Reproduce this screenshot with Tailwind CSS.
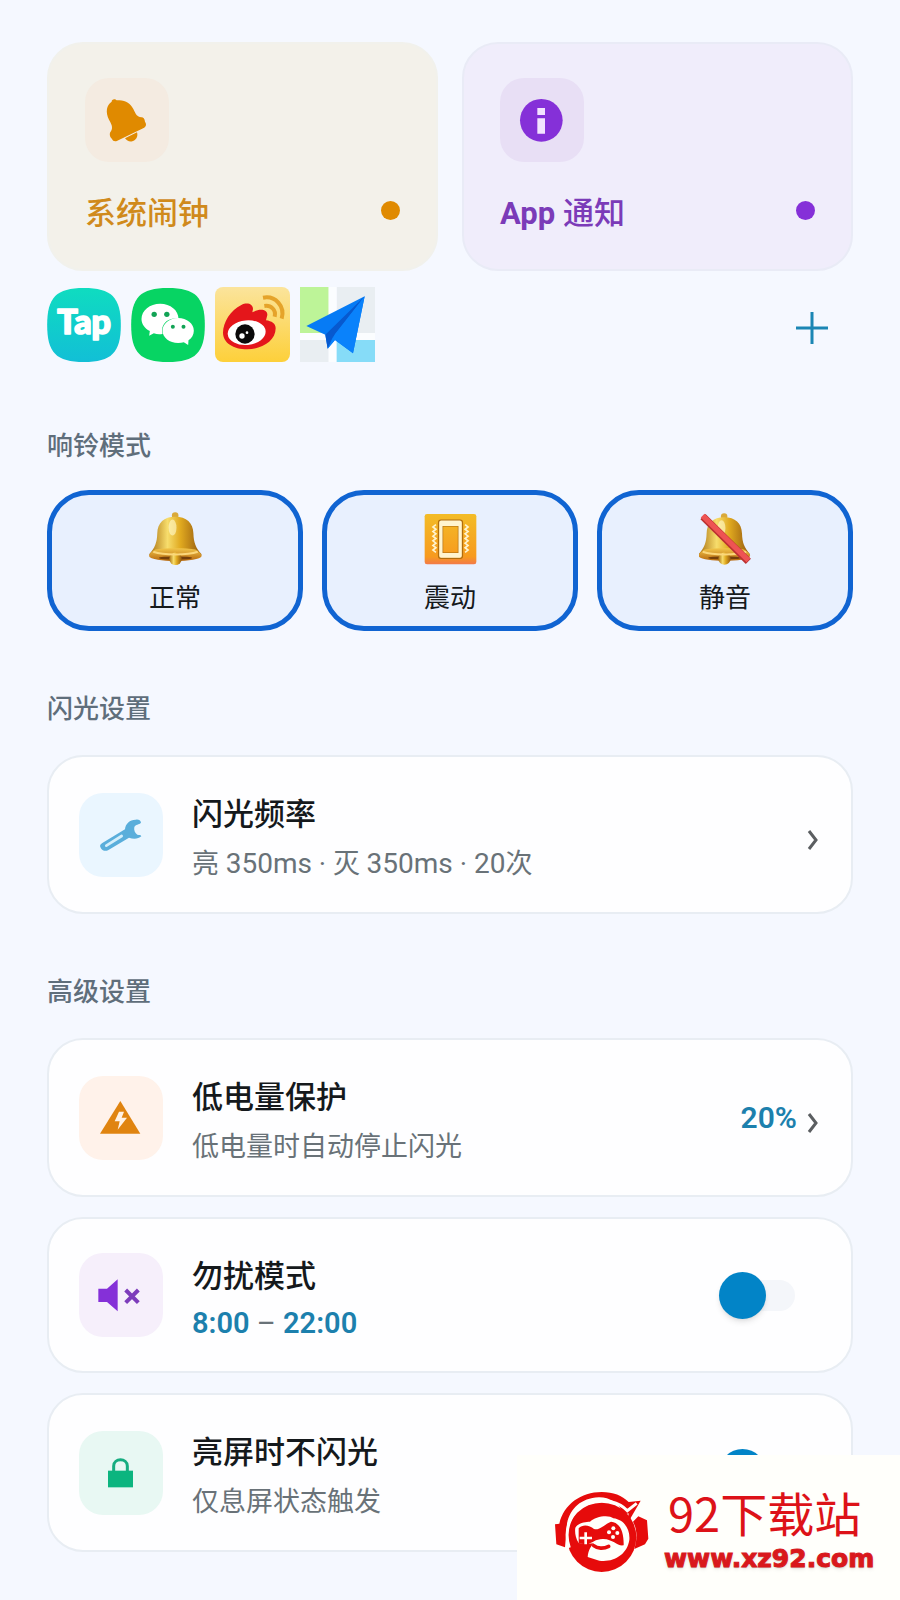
<!DOCTYPE html>
<html lang="zh-CN">

<head>
    <meta charset="UTF-8">
    <meta name="viewport" content="width=device-width, initial-scale=1.0">
    <title>闪光设置</title>

    <!--Tailwind library-->
    <script src="https://cdn.jsdelivr.net/npm/@tailwindcss/browser@4"></script>
</head>

<body class="relative min-h-screen overflow-x-hidden bg-[#f5f8ff] font-[Roboto,'Noto_Sans_CJK_SC',sans-serif] text-[#15191c]">
    <main class="px-[47px] pt-[42px] pb-10">
        <!--Source cards-->
        <div class="grid grid-cols-2 gap-6">
            <button class="rounded-[36px] border-2 border-[#f1f1ec] bg-[#f3f1ea] px-[36px] pt-[34px] pb-[37px] text-left">
                <span class="block size-[84px] rounded-3xl bg-[#f4ebe1]">
                    <svg viewBox="165 145 252 252" class="size-full" fill="#e08a00">
                        <path d="M245 216C244 208 256 206 260 212C285 209 301 220 310 238C317 253 321 262 334 263C342 263 344 270 345 276C350 283 349 291 341 295L262 333C254 337 249 334 246 328C239 322 237 311 243 305C250 292 244 283 237 270C226 248 229 226 245 216Z" />
                        <path d="M285 326L321 308C325 321 318 331 307 335C297 337 290 333 285 326Z" />
                    </svg>
                </span>
                <span class="mt-[34px] flex items-center justify-between">
                    <span class="text-[31px] leading-9 font-medium text-[#d08a1c]">系统闹钟</span>
                    <span class="mb-2 size-[19px] rounded-full bg-[#e08a00]"></span>
                </span>
            </button>

            <button class="rounded-[36px] border-2 border-[#e9ebf6] bg-[#f0edfb] px-[36px] pt-[34px] pb-[37px] text-left">
                <span class="block size-[84px] rounded-3xl bg-[#e8dff5]">
                    <svg viewBox="150 145 252 252" class="size-full">
                        <circle cx="274" cy="272" r="64" fill="#8530d8" />
                        <path d="M262 235h23v21h-23zM262 266h23v46h-23z" fill="#f3e3ff" />
                    </svg>
                </span>
                <span class="mt-[34px] flex items-center justify-between">
                    <span class="text-[31px] leading-9 font-medium text-[#7b3bb8]"><span class="font-bold">App</span> 通知</span>
                    <span class="mb-2 size-[19px] rounded-full bg-[#8530d8]"></span>
                </span>
            </button>
        </div>

        <!--Selected apps-->
        <div class="mt-4 flex items-end justify-between pb-[6px]">
            <div class="flex items-center gap-[10px]">
                <svg viewBox="22 37 221 222" class="size-[74px]" role="img" aria-label="TapTap">
                    <defs>
                        <linearGradient id="tapBg" x1="0" y1="0" x2="0" y2="1">
                            <stop offset="0" stop-color="#0fdcc0" />
                            <stop offset="1" stop-color="#12bfd6" />
                        </linearGradient>
                    </defs>
                    <path d="M132 37C215 37 243 65 243 148S215 259 132 259S22 231 22 148S50 37 132 37Z" fill="url(#tapBg)" />
                    <text x="133" y="175" text-anchor="middle" font-family="Lato, sans-serif" font-weight="900" font-size="102" fill="#fff" stroke="#fff" stroke-width="5" stroke-linejoin="round">Tap</text>
                </svg>
                <svg viewBox="275 37 221 222" class="size-[74px]" role="img" aria-label="微信">
                    <path d="M385 37C468 37 496 65 496 148S468 259 385 259S275 231 275 148S303 37 385 37Z" fill="#07d463" />
                    <path d="M362 84C393 84 417 104 417 129C385 124 362 145 369 175C360 177 351 176 343 173L329 180L331 166C315 158 306 145 306 130C306 104 331 84 362 84Z" fill="#fff" />
                    <path d="M416 127C442 127 463 144 463 165C463 177 457 187 447 194L446 208L433 200C428 201 422 202 416 202C390 202 369 185 369 165S390 127 416 127Z" fill="#fff" />
                    <g fill="#12a355">
                        <circle cx="344" cy="116" r="8" />
                        <circle cx="382" cy="116" r="8" />
                        <circle cx="400" cy="153" r="6" />
                        <circle cx="432" cy="153" r="6" />
                    </g>
                </svg>
                <svg viewBox="525 37 225 225" class="size-[75px]" role="img" aria-label="微博">
                    <defs>
                        <linearGradient id="weiboBg" x1="0" y1="0" x2="0" y2="1">
                            <stop offset="0" stop-color="#fbe49c" />
                            <stop offset="1" stop-color="#fdd03a" />
                        </linearGradient>
                    </defs>
                    <rect x="525" y="37" width="225" height="225" rx="24" fill="url(#weiboBg)" />
                    <path d="M549 174C549 143 572 106 604 91C620 82 639 87 639 103L637 113C658 101 683 103 682 121L678 137C695 139 707 147 707 161C707 199 665 224 622 224C580 224 549 204 549 174Z" fill="#e4161b" />
                    <ellipse cx="620" cy="174" rx="57" ry="37" fill="#fff" transform="rotate(-5 620 174)" />
                    <circle cx="615" cy="178" r="29" fill="#0b0a0a" />
                    <circle cx="606" cy="184" r="8" fill="#fff" />
                    <circle cx="621" cy="174" r="4" fill="#fff" />
                    <g fill="none" stroke="#e5a32a" stroke-width="12">
                        <path d="M669 69C706 62 736 94 725 132" />
                        <path d="M673 94C693 91 709 105 704 126" />
                    </g>
                </svg>
                <svg viewBox="777 37 225 225" class="size-[75px]" role="img" aria-label="地图">
                    <path d="M777 37h86v138h-86z" fill="#bdf498" />
                    <path d="M887 37h115v138h-115zM777 196h86v66h-86z" fill="#e9eef2" />
                    <path d="M863 37h24v225h-24zM777 175h225v21h-225z" fill="#fbfdff" />
                    <path d="M887 196h115v66h-115z" fill="#86dcf8" />
                    <path d="M971 65L796 154L853 180L860 222L882 196L936 236Z" fill="#067bf5" />
                    <path d="M971 65L853 180L860 222L874 190Z" fill="#0759cf" />
                    <path d="M971 65L882 178L860 222L882 196L936 236Z" fill="#0a82fb" />
                </svg>
            </div>
            <button class="mr-[20px] flex h-[68px] w-[42px] items-center justify-center" aria-label="添加应用">
                <svg viewBox="0 0 32 32" class="size-8" stroke="#1b86b4" stroke-width="3">
                    <path d="M16 0V32M0 16H32" />
                </svg>
            </button>
        </div>

        <!--Ring mode-->
        <h2 class="mt-15 text-[26px] leading-9 font-medium text-[#5f6e7b]">响铃模式</h2>
        <div class="mt-[26px] grid grid-cols-3 gap-[19px]">
            <button class="flex flex-col items-center rounded-[42px] border-5 border-[#1064d2] bg-[#e8f0fe] pt-[17px] pb-[9px]">
                <svg viewBox="325 277 160 160" class="size-[53px]">
                    <defs>
                        <linearGradient id="gold" x1="0" y1="0" x2="1" y2="0">
                            <stop offset="0" stop-color="#a97010" />
                            <stop offset=".35" stop-color="#f7dd6c" />
                            <stop offset=".6" stop-color="#e0a91f" />
                            <stop offset="1" stop-color="#94590f" />
                        </linearGradient>
                        <linearGradient id="rim" x1="0" y1="0" x2="0" y2="1">
                            <stop offset="0" stop-color="#f1c549" />
                            <stop offset="1" stop-color="#b8690f" />
                        </linearGradient>
                        <g id="bell">
                            <circle cx="404" cy="288" r="10" fill="#d9a93a" />
                            <path d="M404 291C438 291 458 309 459 341C460 370 466 384 483 404C490 425 321 425 326 404C343 384 349 370 350 341C351 309 370 291 404 291Z" fill="url(#gold)" />
                            <path d="M344 390C375 385 435 385 465 390C475 396 484 402 484 410C478 430 331 430 325 410C326 402 334 396 344 390Z" fill="url(#rim)" />
                            <ellipse cx="405" cy="416" rx="50" ry="5" fill="#75400c" />
                            <circle cx="405" cy="418" r="19" fill="url(#gold)" />
                            <path d="M338 397C370 408 440 408 472 397" fill="none" stroke="#fbd77b" stroke-width="6" />
                            <ellipse cx="396" cy="324" rx="12" ry="24" fill="#fff7c4" opacity=".65" />
                        </g>
                    </defs>
                    <use href="#bell" />
                </svg>
                <span class="mt-[14px] text-[26px] leading-[38px]">正常</span>
            </button>
            <button class="flex flex-col items-center rounded-[42px] border-5 border-[#1064d2] bg-[#e8f0fe] pt-[17px] pb-[9px]">
                <svg viewBox="-2 -6 160 160" class="size-[53px]">
                    <defs>
                        <linearGradient id="orange" x1="0" y1="0" x2="0" y2="1">
                            <stop offset="0" stop-color="#f3bc27" />
                            <stop offset=".85" stop-color="#f79a1e" />
                            <stop offset="1" stop-color="#f2794a" />
                        </linearGradient>
                    </defs>
                    <rect width="156" height="152" rx="7" fill="url(#orange)" />
                    <g fill="none" stroke="#b06d0e" stroke-width="4">
                        <rect x="42" y="19" width="72" height="115" rx="7" />
                        <rect x="54" y="36" width="48" height="82" />
                    </g>
                    <path d="M44 26a6 6 0 0 1 6-6h56a6 6 0 0 1 6 6v100a6 6 0 0 1-6 6h-56a6 6 0 0 1-6-6zM54 36v82h48v-82z" fill="#fff4cf" fill-rule="evenodd" />
                    <path d="M34 32l-9 7 9 7-9 7 9 7-9 7 9 7-9 7 9 7-9 7 9 7-9 7 9 7M122 32l9 7-9 7 9 7-9 7 9 7-9 7 9 7-9 7 9 7-9 7 9 7-9 7" fill="none" stroke="#fff4cf" stroke-width="5" />
                </svg>
                <span class="mt-[14px] text-[26px] leading-[38px]">震动</span>
            </button>
            <button class="flex flex-col items-center rounded-[42px] border-5 border-[#1064d2] bg-[#e8f0fe] pt-[17px] pb-[9px]">
                <svg viewBox="325 277 160 160" class="size-[53px]">
                    <use href="#bell" transform="translate(5 8) scale(.98)" />
                    <path d="M337 291L474 426" stroke="#bb3030" stroke-width="22" />
                    <path d="M336 288L474 423" stroke="#ee5353" stroke-width="16" />
                </svg>
                <span class="mt-[14px] text-[26px] leading-[38px]">静音</span>
            </button>
        </div>

        <!--Flash settings-->
        <h2 class="mt-15 text-[26px] leading-9 font-medium text-[#5f6e7b]">闪光设置</h2>
        <button class="mt-7 flex w-full items-center rounded-[36px] border-2 border-[#e8edf3] bg-[#fefeff] px-[30px] py-7 text-left">
            <span class="size-[84px] shrink-0 rounded-3xl bg-[#eaf6ff]">
                <svg viewBox="118 332 252 252" class="size-full">
                    <path d="M188 482L256 441C257 424 272 411 289 412C297 411 303 414 304 421C298 427 288 426 284 434C282 443 286 453 293 457C299 458 304 457 305 462C296 471 280 471 268 466L205 504C196 508 186 504 183 496C179 490 182 486 188 482Z" fill="#5aaedb" />
                    <path d="M200 490L246 461" stroke="#d5effb" stroke-width="8" stroke-linecap="round" />
                </svg>
            </span>
            <span class="ml-[29px] flex grow flex-col gap-[9px] pt-[10px]">
                <span class="text-[31px] leading-10 font-medium">闪光频率</span>
                <span class="text-[27px] leading-10 text-[#697278]">亮 <span class="text-[28px]">350ms ·</span> 灭 <span class="text-[28px]">350ms · 20</span>次</span>
            </span>
            <svg viewBox="0 0 12 20" class="mt-[10px] mr-[2px] h-5 w-3" fill="none" stroke="#5b5e61" stroke-width="3">
                <path d="M2 1L9 10L2 19" />
            </svg>
        </button>

        <!--Advanced settings-->
        <h2 class="mt-15 text-[26px] leading-9 font-medium text-[#5f6e7b]">高级设置</h2>
        <div class="mt-7 flex flex-col gap-5">
            <button class="flex w-full items-center rounded-[36px] border-2 border-[#e8edf3] bg-[#fefeff] px-[30px] py-7 text-left">
                <span class="size-[84px] shrink-0 rounded-3xl bg-[#fff2ea]">
                    <svg viewBox="118 312 252 252" class="size-full">
                        <path d="M242 387L302 485H181Z" fill="#e08410" />
                        <path d="M238 419H253L246 437H262L234 473L240 448H225Z" fill="#fff2e4" />
                    </svg>
                </span>
                <span class="ml-[29px] flex grow flex-col gap-[9px] pt-[10px]">
                    <span class="text-[31px] leading-10 font-medium">低电量保护</span>
                    <span class="text-[27px] leading-10 text-[#697278]">低电量时自动停止闪光</span>
                </span>
                <span class="mr-[10px] text-[30px] leading-10 font-semibold text-[#1c80ad]">20%</span>
                <svg viewBox="0 0 12 20" class="mt-[10px] mr-[2px] h-5 w-3" fill="none" stroke="#5b5e61" stroke-width="3">
                    <path d="M2 1L9 10L2 19" />
                </svg>
            </button>

            <div class="flex items-center rounded-[36px] border-2 border-[#e8edf3] bg-[#fefeff] px-[30px] py-7">
                <span class="size-[84px] shrink-0 rounded-3xl bg-[#f6effb]">
                    <svg viewBox="118 124 252 252" class="size-full">
                        <path d="M176 231H202L234 203V299L202 271H176Z" fill="#8530d8" />
                        <path d="M258 235L296 273M296 235L258 273" stroke="#7d3cbb" stroke-width="12" />
                    </svg>
                </span>
                <label for="dnd" class="ml-[29px] flex grow flex-col gap-[6px] pt-[10px]">
                    <span class="text-[31px] leading-10 font-medium">勿扰模式</span>
                    <span class="text-[29px] leading-10 text-[#697278]"><span class="font-semibold text-[#1c80ad]">8:00</span> – <span class="font-semibold text-[#1c80ad]">22:00</span></span>
                </label>
                <input type="checkbox" id="dnd" class="relative mr-[26px] h-[31px] w-[76px] appearance-none rounded-full bg-[#f4f6fa] before:absolute before:-top-2 before:left-0 before:size-[47px] before:rounded-full before:bg-[#0284c7] before:shadow-md">
            </div>

            <div class="flex items-center rounded-[36px] border-2 border-[#e8edf3] bg-[#fefeff] px-[30px] py-7">
                <span class="size-[84px] shrink-0 rounded-3xl bg-[#e8f8f3]">
                    <svg viewBox="118 132 252 252" class="size-full">
                        <path d="M205 251H280V301H205Z" fill="#0cb57f" />
                        <path d="M222 252V237C222 212 263 212 263 237V252" fill="none" stroke="#17ad80" stroke-width="9" />
                    </svg>
                </span>
                <label for="screenOn" class="ml-[29px] flex grow flex-col gap-[9px] pt-[10px]">
                    <span class="text-[31px] leading-10 font-medium">亮屏时不闪光</span>
                    <span class="text-[27px] leading-10 text-[#697278]">仅息屏状态触发</span>
                </label>
                <input type="checkbox" id="screenOn" class="relative mr-[26px] h-[31px] w-[76px] appearance-none rounded-full bg-[#f4f6fa] before:absolute before:-top-2 before:left-0 before:size-[47px] before:rounded-full before:bg-[#0284c7] before:shadow-md">
            </div>
        </div>
    </main>

    <!--Site badge, sits over the bottom right corner-->
    <div class="absolute right-0 bottom-0 flex h-[145px] w-[383px] items-center bg-[#fffffb] pt-[9px] pl-[38px]">
        <svg viewBox="167 190 282 240" class="h-[80px] w-[94px] shrink-0" role="img" aria-label="92下载站">
            <g fill="#e60b0b">
                <path d="M180 285C193 227 245 190 307 190C342 190 368 201 388 220L424 216L384 285L388 254L372 258C362 222 328 205 298 206C245 209 213 238 203 285L197 356L171 347L167 287Z" />
                <circle cx="307" cy="326" r="104" />
                <path d="M417 263L443 275L447 330L437 347L405 361C414 330 414 303 401 279Z" />
            </g>
            <path d="M210 357C190 300 218 237 272 222C315 208 360 220 384 246L412 224" fill="none" stroke="#fffffb" stroke-width="9" />
            <path d="M228 297C240 279 260 280 272 279C288 262 330 257 342 269C375 273 393 302 390 334C384 377 343 402 300 396L265 385C267 365 275 352 284 344C264 346 252 345 238 343C228 327 226 309 228 297Z" fill="#fffffb" />
            <path d="M238 299C250 286 270 289 284 301C302 306 312 289 335 279C365 281 374 317 373 350C354 354 343 332 312 331C290 330 279 343 262 348L238 343Z" fill="#e60b0b" />
            <path d="M259 311V347M241 328H278" stroke="#fffffb" stroke-width="8" />
            <g fill="#fffffb">
                <circle cx="342" cy="299" r="6" />
                <circle cx="329" cy="311" r="6" />
                <circle cx="354" cy="313" r="6" />
                <circle cx="341" cy="325" r="6" />
            </g>
            <path d="M283 351C294 360 313 361 328 353" fill="none" stroke="#e60b0b" stroke-width="11" stroke-linecap="round" />
        </svg>
        <div class="ml-[15px] whitespace-nowrap">
            <p class="pl-1 font-['Noto_Sans_CJK_SC',sans-serif] text-[47px] leading-[54px] text-[#dd1218]">92下载站</p>
            <p class="font-['DejaVu_Sans',sans-serif] text-[25px] leading-[40px] font-bold text-[#d9181c] [-webkit-text-stroke:1px_#d9181c] text-shadow-md">www.xz92.com</p>
        </div>
    </div>
</body>

</html>
